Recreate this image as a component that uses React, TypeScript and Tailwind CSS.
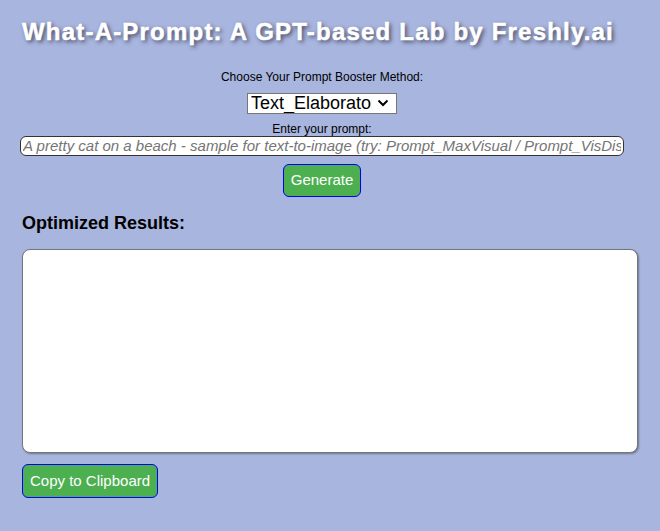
import { useState } from "react"

const methods = ["Text_Elaborator", "Prompt_MaxVisual", "Prompt_VisDistill"]

export default function App() {
  const [method, setMethod] = useState(methods[0])
  const [prompt, setPrompt] = useState("")
  const [result, setResult] = useState("")

  return (
    <div className="min-h-[531px] w-full bg-[#a8b5de] px-[22px] pt-[18px] font-['Liberation_Sans',Arial,sans-serif] text-black">
      <h1 className="text-[24px] font-bold leading-[28px] tracking-[1.2px] text-white [-webkit-text-stroke:0.5px_white] [text-shadow:2px_2px_4px_rgba(40,40,60,0.8)]">
        What-A-Prompt: A GPT-based Lab by Freshly.ai
      </h1>

      <div className="mt-[24px] flex w-[600px] flex-col items-center">
        <label className="text-[12px] leading-[14px]">Choose Your Prompt Booster Method:</label>
        <div className="relative mt-[8px]">
          <select
            value={method}
            onChange={(e) => setMethod(e.target.value)}
            className="h-[21px] w-[150px] appearance-none border border-[#767676] bg-white pl-[3px] pr-[24px] text-[18px] leading-[19px] outline-none"
          >
            {methods.map((m) => (
              <option key={m} value={m}>
                {m}
              </option>
            ))}
          </select>
          <svg
            className="pointer-events-none absolute right-[8px] top-[7px]"
            width="12"
            height="8"
            viewBox="0 0 12 8"
            fill="none"
          >
            <path d="M1.5 1.5 6 6l4.5-4.5" stroke="black" strokeWidth="2" />
          </svg>
        </div>

        <label className="mt-[6px] text-[12px] leading-[14px]">Enter your prompt:</label>
        <input
          value={prompt}
          onChange={(e) => setPrompt(e.target.value)}
          placeholder="A pretty cat on a beach - sample for text-to-image (try: Prompt_MaxVisual / Prompt_VisDistill)"
          className="h-[20px] w-[604px] shrink-0 rounded-[6px] border border-[#333] bg-white px-[2px] text-[15px] italic outline-none placeholder:text-[#757575]"
        />

        <button className="mt-[8px] h-[33px] rounded-[6px] border border-[#0000ff] bg-[#4caf50] px-[7px] text-[15px] text-white">
          Generate
        </button>
      </div>

      <h2 className="mt-[15px] text-[18px] font-bold leading-[22px]">Optimized Results:</h2>

      <textarea
        value={result}
        onChange={(e) => setResult(e.target.value)}
        className="mt-[15px] block h-[204px] w-[616px] resize-none rounded-[8px] border border-[#767676] bg-white shadow-[1px_1px_2px_rgba(0,0,0,0.35)] outline-none"
      />

      <button className="mt-[11px] h-[34px] rounded-[6px] border border-[#0000ff] bg-[#4caf50] px-[7px] text-[15px] text-white">
        Copy to Clipboard
      </button>
    </div>
  )
}
